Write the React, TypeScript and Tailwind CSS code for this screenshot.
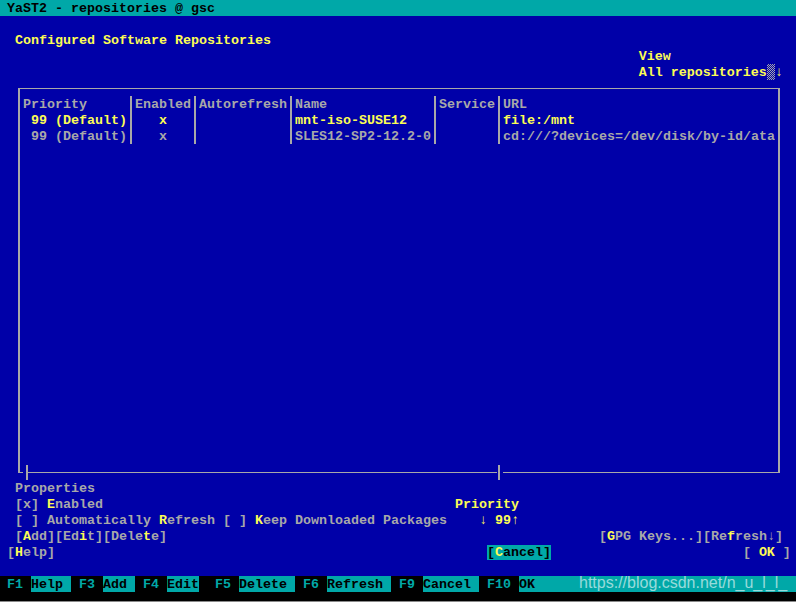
import React from 'react';

// VGA-ish palette of the text console
const GREY = 'text-[#a8a8a8]';
const YEL = 'text-[#fcfc54]';

const sp = (n: number) => ' '.repeat(n);

// hotkey letter
const K = ({ children }: { children: React.ReactNode }) => <span className={YEL}>{children}</span>;

// single glyph that must keep one cell width (arrows come from a fallback font)
const Cell = ({ children, className = '' }: { children: React.ReactNode; className?: string }) => (
  <span className={`inline-block w-2 overflow-hidden text-center align-top leading-4 ${className}`}>{children}</span>
);

const Line = ({ children, className = '' }: { children?: React.ReactNode; className?: string }) => (
  <div className={`h-4 shrink-0 whitespace-pre pl-[7px] pt-px ${className}`}>{children}</div>
);

// column separator of the table, drawn in the middle of a char cell
const Sep = () => (
  <span className="flex w-2 justify-center">
    <span className="w-[2px] bg-[#a8a8a8]" />
  </span>
);

const cols = [104, 56, 88, 136, 56, 272];

type Row = { cells: string[]; color: string };

const header: Row = { cells: ['Priority', 'Enabled', 'Autorefresh', 'Name', 'Service', 'URL'], color: GREY };
const rows: Row[] = [
  { cells: [' 99 (Default)', '   x', '', 'mnt-iso-SUSE12', '', 'file:/mnt'], color: YEL },
  { cells: [' 99 (Default)', '   x', '', 'SLES12-SP2-12.2-0', '', 'cd:///?devices=/dev/disk/by-id/ata'], color: GREY },
];

function TableRow({ row }: { row: Row }) {
  return (
    <div className={`flex h-4 ${row.color}`}>
      {row.cells.map((c, i) => (
        <React.Fragment key={i}>
          {i > 0 && <Sep />}
          <span className="whitespace-pre overflow-hidden pt-px" style={{ width: cols[i] }}>{c}</span>
        </React.Fragment>
      ))}
    </div>
  );
}

// scrollbar thumb marks sitting on the bottom border
function Tick({ left, gapL, gapR }: { left: number; gapL: number; gapR: number }) {
  return (
    <>
      <div className="absolute bottom-[-1px] h-[1px] bg-[#0000a8]" style={{ left: left - gapL, width: gapL + gapR + 2 }} />
      <div className="absolute bottom-[-8px] h-[15px] w-[2px] bg-[#a8a8a8]" style={{ left }} />
    </>
  );
}

const fkeys: [string, string][] = [
  ['F1 ', 'Help '],
  [' F3 ', 'Add '],
  [' F4 ', 'Edit'],
  ['  F5 ', 'Delete '],
  [' F6 ', 'Refresh '],
  [' F9 ', 'Cancel '],
  [' F10 ', 'OK'],
];

export default function App() {
  return (
    <div className="relative flex h-[602px] w-[796px] flex-col overflow-hidden bg-[#0000a8] font-['Liberation_Mono','DejaVu_Sans_Mono',monospace] text-[13.333px] leading-4 font-bold text-[#a8a8a8]">
      {/* title bar */}
      <Line className="bg-[#00a8a8] text-black">YaST2 - repositories @ gsc</Line>
      <Line />
      <Line className={YEL}>{' Configured Software Repositories'}</Line>
      <Line className={YEL}>{sp(79)}View</Line>
      <Line className={YEL}>
        {sp(79)}All repositories
        <span className="-mt-px inline-block h-4 w-2 align-top bg-[repeating-conic-gradient(#a8a8a8_0_25%,#0000a8_0_50%)] bg-[length:2px_2px]" />
        <Cell>↓</Cell>
      </Line>

      {/* repositories table */}
      <div className="relative mt-2 ml-[18px] h-[385px] w-[762px] shrink-0 border-x-2 border-y border-[#a8a8a8] px-[3px] pt-[7px]">
        <TableRow row={header} />
        {rows.map((r, i) => (
          <TableRow key={i} row={r} />
        ))}
        <Tick left={6} gapL={3} gapR={0} />
        <Tick left={478} gapL={1} gapR={3} />
      </div>

      <div className="h-[7px] shrink-0" />
      <Line>{' Properties'}</Line>
      <Line>
        {' [x] '}<K>E</K>nabled{sp(44)}<K>Priority</K>
      </Line>
      <Line>
        {' [ ] Automatically '}<K>R</K>{'efresh [ ] '}<K>K</K>{'eep Downloaded Packages'}{sp(4)}
        <Cell className={YEL}>↓</Cell>
        <span className={YEL}>{' 99'}</span>
        <Cell className={YEL}>↑</Cell>
      </Line>
      <Line>
        {' ['}<K>A</K>{'dd][Ed'}<K>i</K>{'t][Dele'}<K>t</K>{'e]'}{sp(54)}[<K>G</K>{'PG Keys...][Re'}<K>f</K>resh
        <Cell>↓</Cell>]
      </Line>
      <Line>
        [<K>H</K>elp]{sp(54)}
        <span className="bg-[#00a8a8] text-black">
          [<K>C</K>ancel]
        </span>
        {sp(24)}[ <K>OK</K> ]
      </Line>
      <Line />

      {/* function key bar */}
      <div className="flex h-4 shrink-0 bg-black pl-[7px] whitespace-pre">
        {fkeys.map(([k, label], i) => (
          <React.Fragment key={k}>
            <span className="pt-px text-[#00a8a8]">{k}</span>
            <span className={`bg-[#00a8a8] pt-px text-black ${i === fkeys.length - 1 ? 'flex-1' : ''}`}>{label}</span>
          </React.Fragment>
        ))}
      </div>
      <div className="flex-1 bg-black" />
      <div className="h-[1px] bg-[#8a8a8a]" />

      {/* blog watermark over the key bar */}
      <div className="absolute top-[575px] left-[579px] font-['Liberation_Sans',Arial,sans-serif] text-[16px] leading-4 font-normal text-white/60">
        https://blog.csdn.net/n_u_l_l_
      </div>
    </div>
  );
}
